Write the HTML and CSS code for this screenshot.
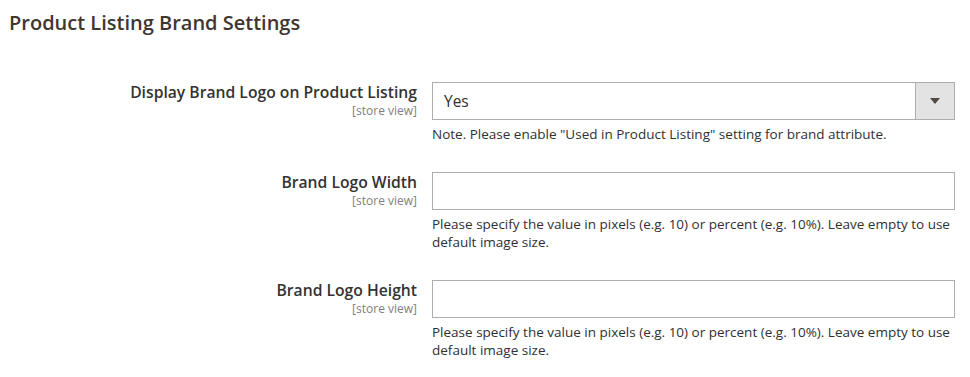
FILE: index.html
```html
<!DOCTYPE html>
<html lang="en">
<head>
  <meta charset="UTF-8" />
  <meta name="viewport" content="width=device-width, initial-scale=1.0" />
  <title>Product Listing Brand Settings</title>
  <link rel="stylesheet" href="styles.css">
</head>
<body>
  <section class="config-section">
    <h2>Product Listing Brand Settings</h2>

    <div class="config-rows">
      <div class="row">
        <div class="label">
          <span>Display Brand Logo on Product Listing</span>
          <small>[store view]</small>
        </div>
        <div class="value">
          <div class="select">
            <span class="select-text">Yes</span>
            <span class="select-btn"><span class="arrow"></span></span>
          </div>
          <p class="note">Note. Please enable "Used in Product Listing" setting for brand attribute.</p>
        </div>
      </div>

      <div class="row">
        <div class="label">
          <span>Brand Logo Width</span>
          <small>[store view]</small>
        </div>
        <div class="value">
          <input type="text" class="text-input" />
          <p class="note">Please specify the value in pixels (e.g. 10) or percent (e.g. 10%). Leave empty to use default image size.</p>
        </div>
      </div>

      <div class="row">
        <div class="label">
          <span>Brand Logo Height</span>
          <small>[store view]</small>
        </div>
        <div class="value">
          <input type="text" class="text-input" />
          <p class="note">Please specify the value in pixels (e.g. 10) or percent (e.g. 10%). Leave empty to use default image size.</p>
        </div>
      </div>
    </div>
  </section>
</body>
</html>
```

FILE: styles.css
```css
body {
  margin: 0;
  background: #ffffff;
  font-family: "Open Sans", "Liberation Sans", sans-serif;
  color: #303030;
}

.config-section {
  padding: 9px 0 0 9px;
}

h2 {
  margin: 0;
  font-size: 20px;
  line-height: 28px;
  font-weight: 600;
  color: #41362f;
}

.config-rows {
  margin-top: 45px;
}

.row {
  display: grid;
  grid-template-columns: 408px 523px;
  column-gap: 15px;
  margin-bottom: 29px;
}

.label {
  display: flex;
  flex-direction: column;
  align-items: flex-end;
  text-align: right;
}

.label span {
  font-size: 15.7px;
  line-height: 21px;
  font-weight: 600;
  color: #333333;
}

.label small {
  font-size: 12px;
  line-height: 15px;
  color: #808080;
}

.select {
  display: flex;
  height: 38px;
  box-sizing: border-box;
  border: 1px solid #adadad;
  background: #ffffff;
}

.select-text {
  flex: 1;
  padding-left: 11px;
  font-size: 15.5px;
  line-height: 36px;
  color: #303030;
}

.select-btn {
  width: 38px;
  border-left: 1px solid #adadad;
  background: #e3e3e3;
  display: flex;
  align-items: center;
  justify-content: center;
}

.arrow {
  width: 0;
  height: 0;
  border-left: 5px solid transparent;
  border-right: 5px solid transparent;
  border-top: 6px solid #514943;
}

.text-input {
  display: block;
  width: 100%;
  height: 38px;
  box-sizing: border-box;
  margin: 0;
  border: 1px solid #adadad;
  background: #ffffff;
  font-family: inherit;
  font-size: 15px;
  padding: 0 11px;
}

.note {
  margin: 5px 0 0;
  font-size: 13.5px;
  line-height: 18px;
  color: #303030;
}
```
